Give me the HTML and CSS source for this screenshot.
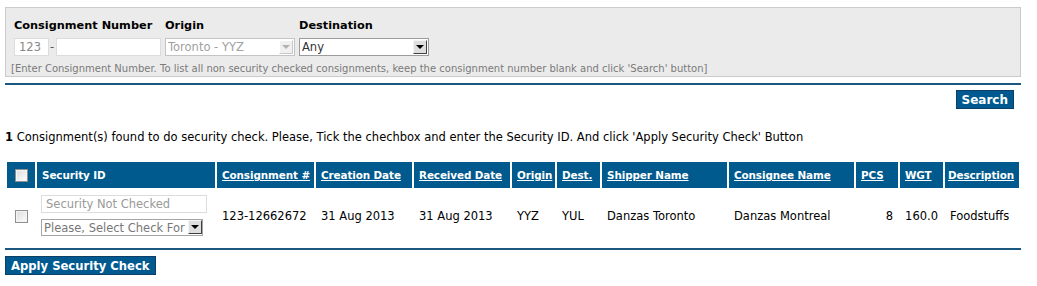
FILE: index.html
```html
<!DOCTYPE html>
<html>
<head>
<meta charset="utf-8">
<link rel="stylesheet" href="styles.css">
</head>
<body>
<div class="page">
  <div class="panel">
    <div class="lbl">Consignment Number</div>
    <div class="lbl">Origin</div>
    <div class="lbl">Destination</div>
    <div class="cn">
      <input class="inp pre" type="text" value="123" readonly>
      <span class="dash">-</span>
      <input class="inp num" type="text">
    </div>
    <div>
      <span class="sel">
        <select class="dd origin" disabled><option>Toronto - YYZ</option></select>
        <span class="arr dis"><span class="tri"></span></span>
      </span>
    </div>
    <div>
      <span class="sel">
        <select class="dd dest"><option>Any</option></select>
        <span class="arr"><span class="tri"></span></span>
      </span>
    </div>
    <div class="hint">[Enter Consignment Number. To list all non security checked consignments, keep the consignment number blank and click 'Search' button]</div>
  </div>
  <div class="rule top"></div>
  <div class="actions"><button class="btn">Search</button></div>
  <p class="msg"><b>1</b> Consignment(s) found to do security check. Please, Tick the chechbox and enter the Security ID. And click 'Apply Security Check' Button</p>
  <table class="grid">
    <thead>
      <tr>
        <th class="c1 ctr"><input type="checkbox" class="cb"></th>
        <th class="c2">Security ID</th>
        <th class="c3"><a href="#">Consignment #</a></th>
        <th class="c4"><a href="#">Creation Date</a></th>
        <th class="c5"><a href="#">Received Date</a></th>
        <th class="c6"><a href="#">Origin</a></th>
        <th class="c7"><a href="#">Dest.</a></th>
        <th class="c8"><a href="#">Shipper Name</a></th>
        <th class="c9"><a href="#">Consignee Name</a></th>
        <th class="c10"><a href="#">PCS</a></th>
        <th class="c11"><a href="#">WGT</a></th>
        <th class="c12"><a href="#">Description</a></th>
      </tr>
    </thead>
    <tbody>
      <tr>
        <td class="ctr"><input type="checkbox" class="cb"></td>
        <td class="sec">
          <input class="inp secid" type="text" placeholder="Security Not Checked">
          <span class="sel rowsel">
            <select class="dd chk"><option>Please, Select Check For</option></select>
            <span class="arr"><span class="tri"></span></span>
          </span>
        </td>
        <td>123-12662672</td>
        <td>31 Aug 2013</td>
        <td>31 Aug 2013</td>
        <td>YYZ</td>
        <td>YUL</td>
        <td>Danzas Toronto</td>
        <td>Danzas Montreal</td>
        <td class="rt">8</td>
        <td class="rt">160.0</td>
        <td>Foodstuffs</td>
      </tr>
    </tbody>
  </table>
  <div class="rule bottom"></div>
  <button class="btn apply">Apply Security Check</button>
</div>
</body>
</html>
```

FILE: styles.css
```css
* { box-sizing: border-box; }
body {
  margin: 0;
  font-family: "DejaVu Sans", Verdana, sans-serif;
  font-size: 11.5px;
  color: #000;
  background: #fff;
}
.page {
  padding: 7px 16px 0 5px;
}
.panel {
  background: #ebebeb;
  border: 1px solid #cbcbcb;
  padding: 11px 8px 1px 8px;
  display: grid;
  grid-template-columns: 151px 134px 1fr;
  height: 70px;
}
.lbl {
  font-weight: bold;
  font-size: 11.3px;
  line-height: 14px;
  margin-bottom: 5px;
}
.cn { display: flex; align-items: center; }
.inp {
  font-family: inherit;
  font-size: 11.5px;
  height: 18px;
  border: 1px solid #dcdcdc;
  background: #fff;
  padding: 0 4px;
  margin: 0;
  outline: none;
}
.pre { width: 35px; color: #888; }
.dash { width: 7px; padding-left: 1px; color: #555; }
.num { width: 105px; }
.sel { position: relative; display: inline-block; vertical-align: top; }
.dd {
  appearance: none;
  -webkit-appearance: none;
  font-family: inherit;
  font-size: 11.5px;
  height: 18px;
  margin: 0;
  padding: 0 18px 0 2px;
  border: 1px solid #a5a5a5;
  background: #fff;
  color: #333;
  border-radius: 0;
  outline: none;
}
.origin { width: 130px; color: #a0a0a0; border-color: #c4c4c4; background: #fff; opacity: 1; }
.dest { width: 130px; border-color: #9c9c9c; }
.arr {
  position: absolute;
  right: 2px;
  top: 2px;
  width: 14px;
  height: 14px;
  background: #dedede;
  border: 1px solid;
  border-color: #f4f4f4 #404040 #404040 #f4f4f4;
  display: flex;
  align-items: center;
  justify-content: center;
}
.arr.dis { background: #f0f0f0; border-color: #fff #c9c9c9 #c9c9c9 #fff; }
.tri {
  width: 0; height: 0;
  border-left: 4px solid transparent;
  border-right: 4px solid transparent;
  border-top: 4px solid #000;
}
.arr.dis .tri { border-top-color: #b0b0b0; }
.hint {
  grid-column: 1 / 4;
  font-size: 10px;
  color: #7a7a7a;
  line-height: 12px;
  margin: 6px 0 0 -3px;
  white-space: nowrap;
}
.rule { height: 2px; background: #1b5680; }
.rule.top { margin-top: 6px; }
.actions { display: flex; justify-content: flex-end; padding-right: 7px; margin-top: 5px; }
.btn {
  font-family: inherit;
  font-weight: bold;
  font-size: 12px;
  color: #fff;
  background: #005a90;
  border: 1px solid #0b3f68;
  height: 19px;
  padding: 0 5px;
  margin: 0;
  line-height: 16px;
  border-radius: 0;
}
.msg { margin: 21px 0 0 0; line-height: 14px; }
.grid {
  margin-top: 16px;
  width: 1016px;
  table-layout: fixed;
  border-collapse: separate;
  border-spacing: 2px;
  margin-left: 0;
}
.grid th {
  background: #005a8d;
  color: #fff;
  font-weight: bold;
  font-size: 10.4px;
  letter-spacing: -0.1px;
  text-align: left;
  height: 26px;
  padding: 0 0 0 5px;
  white-space: nowrap;
}
.grid th a { color: #fff; text-decoration: underline; }
.grid th.c12 { padding-left: 3px; }
.grid td { padding: 5px 4px 5px 5px; white-space: nowrap; vertical-align: middle; }
.grid .ctr { text-align: center; padding: 0; }
.grid td.rt { text-align: right; padding-right: 5px; }
.c1 { width: 28px; }
.c2 { width: 178px; }
.c3 { width: 97px; }
.c4 { width: 96px; }
.c5 { width: 96px; }
.c6 { width: 43px; }
.c7 { width: 43px; }
.c8 { width: 125px; }
.c9 { width: 125px; }
.c10 { width: 42px; }
.c11 { width: 43px; }
.c12 { width: 74px; }
.grid td.sec { padding: 5px 4px 5px 4px; }
.cb {
  appearance: none;
  -webkit-appearance: none;
  width: 13px;
  height: 13px;
  margin: 0;
  border: 1px solid #8e8f8f;
  background: linear-gradient(135deg, #dcdcdc 0%, #f0f0f0 60%, #ffffff 100%);
  box-shadow: inset 0 0 0 1px #f4f4f4;
  vertical-align: middle;
}
.secid { display: block; width: 166px; color: #999; margin-bottom: 6px; }
.secid::placeholder { color: #999; }
.chk { width: 162px; height: 17px; color: #777; padding-right: 0; }
.rowsel .arr { top: 1px; right: 1px; }
.rule.bottom { margin-top: 5px; }
.apply { margin-top: 6px; font-size: 11.6px; padding: 0 5px; }
```
